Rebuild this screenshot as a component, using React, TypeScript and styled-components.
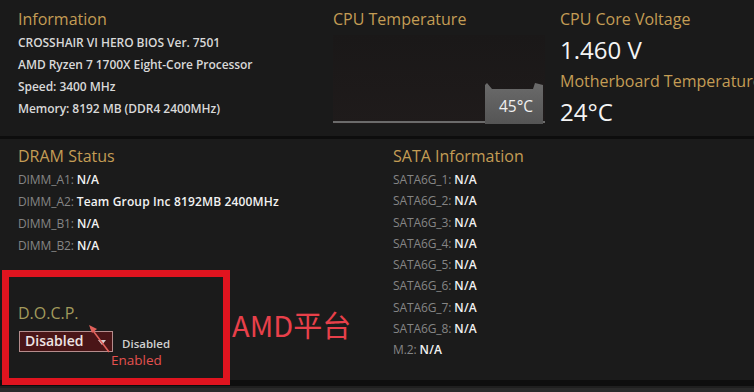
import React from 'react';
import styled, { createGlobalStyle } from 'styled-components';

const Global = createGlobalStyle`
  html, body { margin: 0; padding: 0; background: #141414; }
  body {
    width: 754px; height: 392px; overflow: hidden;
    font-family: "Open Sans", "Noto Sans", sans-serif;
  }
`;

const Page = styled.div`
  position: relative;
  width: 754px;
  height: 392px;
  display: flex;
  flex-direction: column;
  background: #161616;
  overflow: hidden;
`;

const TopPanel = styled.section`
  height: 139px;
  box-sizing: border-box;
  padding: 8px 0 0 18px;
  display: grid;
  grid-template-columns: 315px 227px 1fr;
  background: #1a1a1a;
  border-bottom: 3px solid #0d0d0d;
  overflow: hidden;
`;

const BottomPanel = styled.section`
  flex: 1;
  box-sizing: border-box;
  padding: 6px 0 0 18px;
  display: grid;
  grid-template-columns: 375px 1fr;
  background: #1b1b1b;
`;

const Footer = styled.div`
  height: 12px;
  background: linear-gradient(#0e0e0e 0 6px, #1f1f1f 6px 8px, #2a2a2a 8px);
`;

const Column = styled.div`
  display: flex;
  flex-direction: column;
  min-width: 0;
`;

const Heading = styled.h2<{ $muted?: boolean }>`
  margin: 0;
  font-size: 16px;
  line-height: 22px;
  font-weight: 400;
  white-space: nowrap;
  color: ${(p) => (p.$muted ? '#a29a5c' : '#c49d55')};
`;

const List = styled.div<{ $step: number }>`
  display: flex;
  flex-direction: column;
  margin-top: 2px;
  & > div { height: ${(p) => p.$step}px; line-height: ${(p) => p.$step}px; }
`;

const InfoLine = styled.div`
  font-size: 12px;
  font-weight: 600;
  color: #d8d8d8;
  white-space: nowrap;
  letter-spacing: -0.05px;
`;

const Row = styled.div`
  font-size: 12px;
  white-space: nowrap;
`;

const Label = styled.span`
  color: #858585;
  letter-spacing: -0.1px;
`;

const Value = styled.span`
  color: #f2f2f2;
  font-weight: 600;
  letter-spacing: 0.15px;
`;

const BigValue = styled.div`
  font-size: 24px;
  line-height: 32px;
  color: #f4f4f4;
  margin-top: 4px;
  margin-bottom: 4px;
`;

const Chart = styled.svg`
  display: block;
  margin-top: 5px;
`;

const Docp = styled.div`
  margin-top: 45px;
  display: flex;
  flex-direction: column;
`;

const DocpRow = styled.div`
  display: flex;
  align-items: flex-start;
  margin-top: 7px;
  padding-left: 1px;
`;

const Select = styled.div`
  width: 94px;
  height: 21px;
  box-sizing: border-box;
  border: 1.5px solid #b58c8c;
  background: #4a1517;
  color: #eee4e4;
  font-size: 14px;
  font-weight: 600;
  line-height: 18px;
  padding-left: 5px;
  position: relative;
  &::after {
    content: '';
    position: absolute;
    right: 6px;
    top: 8px;
    border-left: 4px solid transparent;
    border-right: 4px solid transparent;
    border-top: 5px solid #d8d0d0;
  }
`;

const Options = styled.div`
  display: flex;
  flex-direction: column;
  align-items: flex-start;
  margin-left: -2px;
  margin-top: 5px;
`;

const OptionText = styled.div<{ $tone: 'plain' | 'red' }>`
  font-size: ${(p) => (p.$tone === 'red' ? '13.5px' : '11.5px')};
  line-height: 16px;
  font-weight: ${(p) => (p.$tone === 'red' ? 400 : 600)};
  color: ${(p) => (p.$tone === 'red' ? '#e4514f' : '#d0d0d0')};
  padding-left: ${(p) => (p.$tone === 'red' ? '0' : '11px')};
`;

const HighlightBox = styled.div`
  position: absolute;
  left: 2px;
  top: 270px;
  width: 228px;
  height: 115px;
  box-sizing: border-box;
  border: 7px solid #e0141f;
  pointer-events: none;
`;

const Note = styled.div`
  position: absolute;
  left: 232px;
  top: 305px;
  font-family: "Noto Sans CJK SC", "Noto Sans", sans-serif;
  font-size: 29px;
  line-height: 38px;
  color: #e8404a;
  white-space: nowrap;
`;

const Arrow = styled.svg`
  position: absolute;
  left: 84px;
  top: 320px;
  overflow: visible;
`;

const info = [
  'CROSSHAIR VI HERO BIOS Ver. 7501',
  'AMD Ryzen 7 1700X Eight-Core Processor',
  'Speed: 3400 MHz',
  'Memory: 8192 MB (DDR4 2400MHz)',
];

const dram: [string, string][] = [
  ['DIMM_A1', 'N/A'],
  ['DIMM_A2', 'Team Group Inc 8192MB 2400MHz'],
  ['DIMM_B1', 'N/A'],
  ['DIMM_B2', 'N/A'],
];

const sata: [string, string][] = [
  ...Array.from({ length: 8 }, (_, i) => [`SATA6G_${i + 1}`, 'N/A'] as [string, string]),
  ['M.2', 'N/A'],
];

function TempChart() {
  return (
    <Chart width="212" height="89" viewBox="0 0 212 89">
      <defs>
        <linearGradient id="bg" x1="0" y1="0" x2="0" y2="1">
          <stop offset="0" stopColor="#1a1818" />
          <stop offset="1" stopColor="#1f1b1b" />
        </linearGradient>
        <linearGradient id="tab" x1="0" y1="0" x2="0" y2="1">
          <stop offset="0" stopColor="#6a6a6a" />
          <stop offset="1" stopColor="#555555" />
        </linearGradient>
      </defs>
      <rect x="0" y="0" width="212" height="89" fill="url(#bg)" />
      <rect x="0" y="86" width="212" height="2" fill="#6b6b6b" />
      <path d="M152 89 L152 50 L154 48 L159 54 L200 54 L202 48 L210 50 L210 89 Z" fill="url(#tab)" />
      <text x="183" y="77" textAnchor="middle" fill="#f0f0f0" fontSize="15.5" fontFamily="Open Sans, sans-serif">45°C</text>
    </Chart>
  );
}

export default function App() {
  return (
    <>
      <Global />
      <Page>
        <TopPanel>
          <Column>
            <Heading>Information</Heading>
            <List $step={22}>
              {info.map((t) => (
                <InfoLine key={t}>{t}</InfoLine>
              ))}
            </List>
          </Column>
          <Column>
            <Heading>CPU Temperature</Heading>
            <TempChart />
          </Column>
          <Column>
            <Heading>CPU Core Voltage</Heading>
            <BigValue>1.460 V</BigValue>
            <Heading>Motherboard Temperature</Heading>
            <BigValue>24°C</BigValue>
          </Column>
        </TopPanel>
        <BottomPanel>
          <Column>
            <Heading>DRAM Status</Heading>
            <List $step={22}>
              {dram.map(([l, v]) => (
                <Row key={l}>
                  <Label>{l}: </Label>
                  <Value>{v}</Value>
                </Row>
              ))}
            </List>
            <Docp>
              <Heading $muted>D.O.C.P.</Heading>
              <DocpRow>
                <Select>Disabled</Select>
                <Options>
                  <OptionText $tone="plain">Disabled</OptionText>
                  <OptionText $tone="red">Enabled</OptionText>
                </Options>
              </DocpRow>
            </Docp>
          </Column>
          <Column>
            <Heading>SATA Information</Heading>
            <List $step={21.3}>
              {sata.map(([l, v]) => (
                <Row key={l}>
                  <Label>{l}: </Label>
                  <Value>{v}</Value>
                </Row>
              ))}
            </List>
          </Column>
        </BottomPanel>
        <Footer />
        <HighlightBox />
        <Arrow width="30" height="36" viewBox="0 0 30 36">
          <line x1="25" y1="32" x2="7" y2="8" stroke="#e0605a" strokeWidth="1.6" />
          <path d="M5 5 L13 9 L8 13 Z" fill="#e0605a" />
        </Arrow>
        <Note>AMD平台</Note>
      </Page>
    </>
  );
}
